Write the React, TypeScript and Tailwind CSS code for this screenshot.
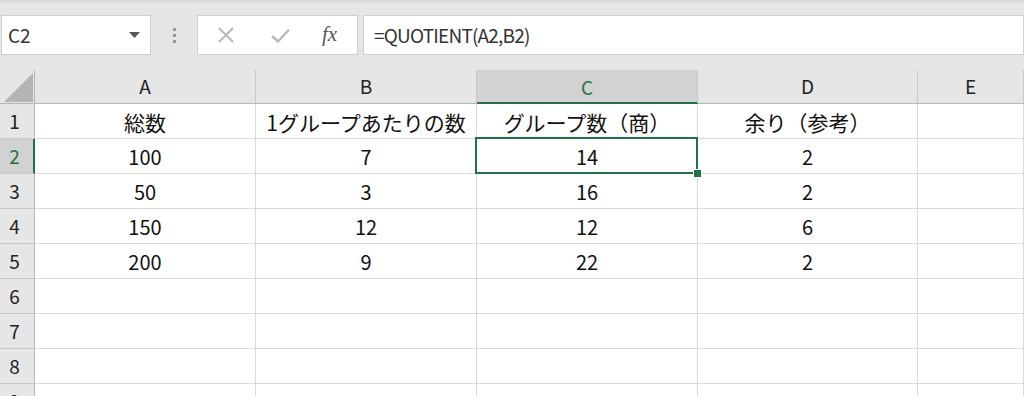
// Excel-like sheet: QUOTIENT example

const GREEN = '#217346'

const columns = ['A', 'B', 'C', 'D', 'E']

const rows: string[][] = [
  ['総数', '1グループあたりの数', 'グループ数（商）', '余り（参考）', ''],
  ['100', '7', '14', '2', ''],
  ['50', '3', '16', '2', ''],
  ['150', '12', '12', '6', ''],
  ['200', '9', '22', '2', ''],
  ['', '', '', '', ''],
  ['', '', '', '', ''],
  ['', '', '', '', ''],
  ['', '', '', '', ''],
]

function Toolbar() {
  return (
    <div className="flex h-[70px] items-start border-t-[3px] border-[#dcdcdc] bg-[#e6e6e6] pt-[12px]">
      {/* Name box */}
      <div className="ml-[1px] flex h-[40px] w-[150px] items-center justify-between border border-[#d0d0d0] bg-white pl-[6px] pr-[10px]">
        <span className="text-[19px] text-[#333]">C2</span>
        <svg width="11" height="7" viewBox="0 0 11 7">
          <path d="M0 0 L11 0 L5.5 6 Z" fill="#555" />
        </svg>
      </div>

      {/* Grip dots */}
      <div className="flex h-[40px] w-[46px] flex-col items-center justify-center gap-[3px]">
        <span className="h-[3px] w-[3px] bg-[#9a9a9a]" />
        <span className="h-[3px] w-[3px] bg-[#9a9a9a]" />
        <span className="h-[3px] w-[3px] bg-[#9a9a9a]" />
      </div>

      {/* Cancel / Enter / Function */}
      <div className="flex h-[40px] w-[161px] items-center border border-[#d0d0d0] bg-white">
        <div className="flex w-[54px] justify-center pl-[2px]">
          <svg width="16" height="16" viewBox="0 0 16 16">
            <path d="M1 1 L15 15 M15 1 L1 15" stroke="#b9b9b9" strokeWidth="2" fill="none" />
          </svg>
        </div>
        <div className="flex w-[56px] justify-center">
          <svg width="19" height="15" viewBox="0 0 19 15">
            <path d="M1 8 L7 13.5 L18 1.5" stroke="#b9b9b9" strokeWidth="2.4" fill="none" />
          </svg>
        </div>
        <div className="flex flex-1 justify-center pr-[6px]">
          <span className="text-[21px] italic text-[#555]" style={{ fontFamily: '"Liberation Serif", "DejaVu Serif", serif' }}>
            fx
          </span>
        </div>
      </div>

      {/* Formula bar */}
      <div className="ml-[5px] flex h-[40px] flex-1 items-center border border-[#d0d0d0] bg-white pl-[10px]">
        <span className="text-[19px] tracking-[-0.8px] text-[#333]">=QUOTIENT(A2,B2)</span>
      </div>
    </div>
  )
}

function CornerCell() {
  return (
    <div className="relative h-[34px] border-r border-b border-[#b6b6b6] bg-[#e6e6e6]">
      <svg className="absolute left-[4px] top-[3px]" width="29" height="29" viewBox="0 0 29 29">
        <path d="M29 0 L29 29 L0 29 Z" fill="#b4b4b4" />
      </svg>
    </div>
  )
}

export default function App() {
  return (
    <div
      className="h-[396px] w-[1024px] overflow-hidden bg-white text-black"
      style={{ fontFamily: '"Noto Sans CJK JP", "Noto Sans", sans-serif' }}
    >
      <Toolbar />

      <div className="grid grid-cols-[35px_221px_221px_221px_220px_1fr]">
        <CornerCell />
        {columns.map((col) => {
          const active = col === 'C'
          return (
            <div
              key={col}
              className={
                active
                  ? 'flex h-[34px] items-center justify-center border-r border-b-2 border-r-[#c8c8c8] border-b-[#217346] bg-[#d2d2d2] pt-[2px] text-[19px] text-[#217346]'
                  : 'flex h-[34px] items-center justify-center border-r border-b border-r-[#c8c8c8] border-b-[#b6b6b6] bg-[#e6e6e6] text-[19px] text-[#222]'
              }
            >
              {col}
            </div>
          )
        })}

        {rows.map((cells, r) => {
          const rowNo = r + 1
          const activeRow = rowNo === 2
          const headerRow = rowNo === 1
          return [
            <div
              key={`h${rowNo}`}
              className={
                activeRow
                  ? 'flex h-[35px] items-center justify-center border-r-2 border-b border-r-[#217346] border-b-[#c8c8c8] bg-[#d2d2d2] pr-[4px] text-[19px] text-[#217346]'
                  : 'flex h-[35px] items-center justify-center border-r border-b border-r-[#b6b6b6] border-b-[#c8c8c8] bg-[#e6e6e6] pr-[5px] text-[19px] text-[#222]'
              }
            >
              {rowNo}
            </div>,
            ...cells.map((value, c) => {
              const selected = activeRow && c === 2
              return (
                <div
                  key={`c${rowNo}-${c}`}
                  className={
                    headerRow
                      ? 'relative flex h-[35px] items-center justify-center border-r border-b border-[#dadada] pt-[3px] text-[21px] text-[#111]'
                      : 'relative flex h-[35px] items-center justify-center border-r border-b border-[#dadada] pt-[1px] text-[20px] text-[#111]'
                  }
                >
                  {value}
                  {selected && (
                    <>
                      <div
                        className="absolute -left-[2px] -top-[2px] bottom-[-1px] right-[-1px] border-2"
                        style={{ borderColor: GREEN }}
                      />
                      <div className="absolute -bottom-[5px] -right-[5px] z-10 h-[9px] w-[9px] border border-white bg-[#217346]" />
                    </>
                  )}
                </div>
              )
            }),
          ]
        })}
      </div>
    </div>
  )
}
